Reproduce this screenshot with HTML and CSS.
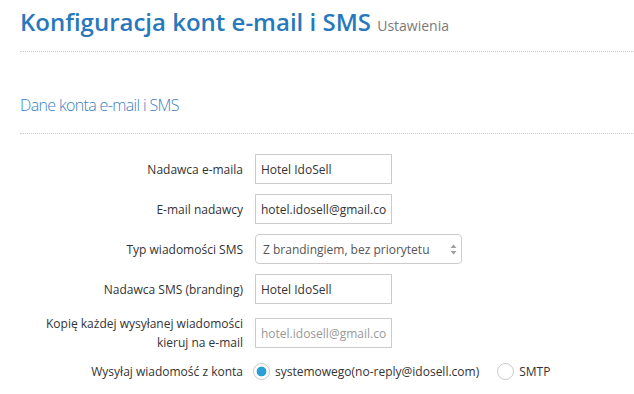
FILE: index.html
```html
<!DOCTYPE html>
<html lang="pl">
<head>
<meta charset="utf-8">
<title>Konfiguracja kont e-mail i SMS</title>
<link rel="stylesheet" href="styles.css">
</head>
<body>
<div class="page">
  <header class="page-header">
    <h1 class="title">Konfiguracja kont e-mail i SMS <small class="subtitle">Ustawienia</small></h1>
  </header>
  <section class="section">
    <h2 class="section-title">Dane konta e-mail i SMS</h2>
    <form class="form">
      <div class="row">
        <label class="label">Nadawca e-maila</label>
        <input class="field" type="text" value="Hotel IdoSell">
      </div>
      <div class="row">
        <label class="label">E-mail nadawcy</label>
        <input class="field" type="text" value="hotel.idosell@gmail.com">
      </div>
      <div class="row">
        <label class="label">Typ wiadomości SMS</label>
        <div class="select">
          <span class="select-text">Z brandingiem, bez priorytetu</span>
          <svg class="select-arrows" width="7" height="11" viewBox="0 0 7 11"><path d="M3.5 0.5 L6.5 4 L0.5 4 Z" fill="#a0a0a0"/><path d="M3.5 10.5 L6.5 7 L0.5 7 Z" fill="#a0a0a0"/></svg>
        </div>
      </div>
      <div class="row">
        <label class="label">Nadawca SMS (branding)</label>
        <input class="field" type="text" value="Hotel IdoSell">
      </div>
      <div class="row">
        <label class="label">Kopię każdej wysyłanej wiadomości<br>kieruj na e-mail</label>
        <input class="field" type="text" placeholder="hotel.idosell@gmail.com">
      </div>
      <div class="row">
        <label class="label">Wysyłaj wiadomość z konta</label>
        <div class="radios">
          <label class="radio-option"><input class="radio" type="radio" name="konto" checked>systemowego(no-reply@idosell.com)</label>
          <label class="radio-option"><input class="radio" type="radio" name="konto">SMTP</label>
        </div>
      </div>
    </form>
  </section>
</div>
</body>
</html>
```
FILE: styles.css
```css
html, body {
  margin: 0;
  padding: 0;
  background: #ffffff;
}
body {
  font-family: "Open Sans", "Liberation Sans", sans-serif;
  color: #333333;
}
.page {
  padding-left: 20px;
}
.page-header {
  padding-top: 4px;
  padding-bottom: 11px;
  border-bottom: 1px dotted #cccccc;
}
.title {
  margin: 0;
  font-size: 24px;
  font-weight: 600;
  line-height: 36px;
  color: #2878bd;
}
.subtitle {
  font-size: 14px;
  font-weight: 400;
  line-height: 1;
  color: #7a7a7a;
}
.section {
  padding-top: 41px;
}
.section-title {
  margin: 0;
  font-size: 16px;
  font-weight: 300;
  line-height: 24px;
  letter-spacing: -0.65px;
  color: #3a7fc2;
  padding-bottom: 16px;
  border-bottom: 1px dotted #cccccc;
}
.form {
  display: flex;
  flex-direction: column;
  gap: 10px;
  padding-top: 20px;
}
.row {
  display: grid;
  grid-template-columns: 223px auto;
  column-gap: 12px;
  align-items: center;
}
.label {
  text-align: right;
  font-size: 12px;
  line-height: 19px;
  color: #333333;
}
.field {
  box-sizing: border-box;
  width: 137px;
  height: 30px;
  margin: 0;
  padding: 0 5px;
  border: 1px solid #cccccc;
  border-radius: 0;
  font-family: "Open Sans", "Liberation Sans", sans-serif;
  font-size: 12px;
  color: #333333;
  background: #ffffff;
  outline: none;
}
.field::placeholder {
  color: #999999;
}
.select {
  box-sizing: border-box;
  width: 207px;
  height: 30px;
  padding: 0 4px 0 7px;
  border: 1px solid #cccccc;
  border-radius: 4px;
  display: flex;
  align-items: center;
  justify-content: space-between;
  font-size: 12px;
  color: #555555;
}
.select-arrows {
  display: block;
}
.radios {
  display: flex;
  align-items: center;
  gap: 20px;
  font-size: 12px;
  line-height: 19px;
}
.radio-option {
  display: flex;
  align-items: center;
  gap: 5px;
}
.radio {
  appearance: none;
  -webkit-appearance: none;
  box-sizing: border-box;
  width: 17px;
  height: 17px;
  margin: 0 0 0 -2px;
  border: 1px solid #c8c8c8;
  border-radius: 50%;
  background: #ffffff;
}
.radio:checked {
  background: radial-gradient(circle, #2a9fd8 0 4.6px, #ffffff 5.2px);
}
```
